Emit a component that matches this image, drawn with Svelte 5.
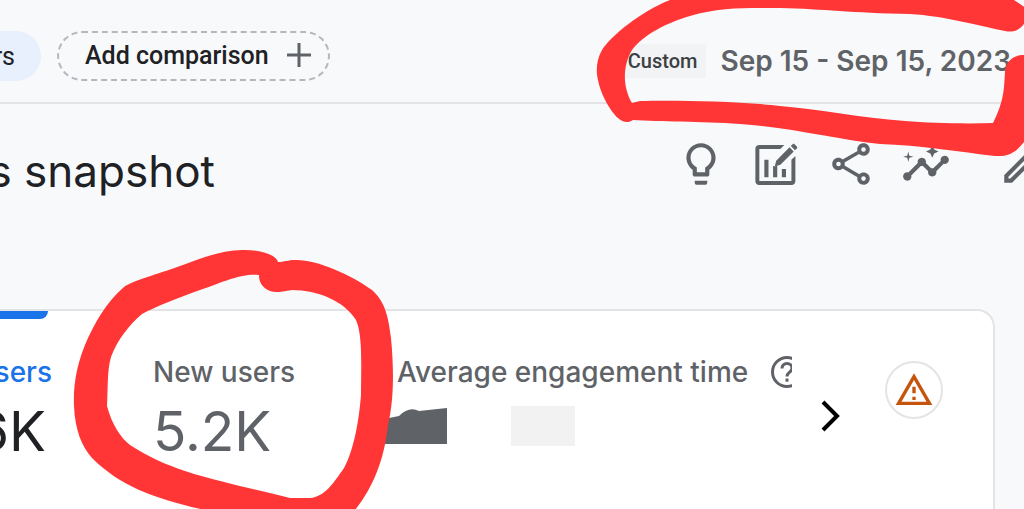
<script lang="ts">
  let {
    title = "s snapshot",
    range = "Sep 15 - Sep 15, 2023",
  }: {
    title?: string;
    range?: string;
  } = $props();

  const actions = [
    {
      label: "Insights",
      path: "M9 21c0 .55.45 1 1 1h4c.55 0 1-.45 1-1v-1H9v1zm3-19C8.14 2 5 5.14 5 9c0 2.38 1.19 4.47 3 5.74V17c0 .55.45 1 1 1h6c.55 0 1-.45 1-1v-2.26c1.81-1.27 3-3.36 3-5.74 0-3.86-3.14-7-7-7zm2.85 11.1l-.85.6V16h-4v-2.3l-.85-.6A4.997 4.997 0 017 9c0-2.76 2.24-5 5-5s5 2.24 5 5c0 1.63-.8 3.16-2.15 4.1z",
    },
    {
      label: "Customize report",
      path: "M4 2.9h12l-1.9 1.9H4v15.4h15.4V10l1.9-1.9V20.3c0 1-.8 1.8-1.8 1.8H3.9c-1 0-1.8-.8-1.8-1.8V4.7c0-1 .8-1.8 1.9-1.8zM6.4 10h2v8.4h-2zM10.6 13h2v5.4h-2zM14.8 14.4h2v4h-2zM12.1 10.4l6.4-6.4 2 2-6.4 6.4-2.7.8zM19.1 3.4l.9-.9c.3-.3.6-.3.9 0l1.1 1.1c.3.3.3.6 0 .9l-.9.9z",
    },
    {
      label: "Share",
      path: "M18 16.1c-.8 0-1.5.3-2 .8l-7.1-4.2c.1-.2.1-.5.1-.7s0-.5-.1-.7L15.9 7.2c.6.5 1.3.8 2.1.8 1.7 0 3-1.3 3-3s-1.3-3-3-3-3 1.3-3 3c0 .2 0 .5.1.7L8 9.8C7.5 9.3 6.8 9 6 9c-1.7 0-3 1.3-3 3s1.3 3 3 3c.8 0 1.5-.3 2-.8l7.1 4.2c-.1.2-.1.4-.1.6 0 1.6 1.3 3 3 3s3-1.3 3-3-1.3-2.9-3-2.9zM18 3.9a1.1 1.1 0 110 2.2 1.1 1.1 0 010-2.2zM6 13.1a1.1 1.1 0 110-2.2 1.1 1.1 0 010 2.2zm12 7a1.1 1.1 0 110-2.2 1.1 1.1 0 010 2.2z",
    },
    {
      label: "Trends",
      path: "M21 8c-1.45 0-2.26 1.44-1.93 2.51l-3.55 3.56c-.3-.09-.74-.09-1.04 0l-2.55-2.55C12.27 10.45 11.46 9 10 9c-1.45 0-2.27 1.44-1.93 2.52l-4.56 4.55C2.44 15.74 1 16.55 1 18c0 1.1.9 2 2 2 1.45 0 2.26-1.44 1.93-2.51l4.55-4.56c.3.09.74.09 1.04 0l2.55 2.55C12.73 16.55 13.54 18 15 18c1.45 0 2.27-1.44 1.93-2.52l3.56-3.55C21.56 12.26 23 11.45 23 10c0-1.1-.9-2-2-2zM15 9l.94-2.07L18 6l-2.06-.93L15 3l-.92 2.07L12 6l2.08.93zM3.5 11L4 9l2-.5L4 8l-.5-2L3 8l-2 .5L3 9z",
    },
    {
      label: "Edit",
      path: "M14.06 9.02l.92.92L5.92 19H5v-.92l9.06-9.06M17.66 3c-.25 0-.51.1-.7.29l-1.83 1.83 3.75 3.75 1.83-1.83c.39-.39.39-1.02 0-1.41l-2.34-2.34c-.2-.2-.45-.29-.71-.29zm-3.6 3.19L3 17.25V21h3.75L17.81 9.94l-3.75-3.75z",
    },
  ];
</script>

<div class="page">
  <header class="topbar">
    <div class="filters">
      <button class="chip">rs</button>
      <button class="add-btn">
        Add comparison
        <svg class="plus" viewBox="0 0 26 26" aria-hidden="true">
          <path d="M13 1v24M1 13h24" />
        </svg>
      </button>
    </div>
    <button class="date-range">
      <span class="preset">Custom</span>
      <span class="range">{range}</span>
    </button>
  </header>

  <section class="heading">
    <h1>{title}</h1>
    <div class="actions">
      {#each actions as action}
        <button class="icon-btn" aria-label={action.label}>
          <svg viewBox="0 0 24 24"><path d={action.path} fill-rule="evenodd" /></svg>
        </button>
      {/each}
    </div>
  </section>

  <main class="card">
    <div class="tab-bar"></div>
    <div class="metrics">
      <div class="metric selected">
        <div class="label">sers</div>
        <div class="value">6K</div>
      </div>
      <div class="metric new-users">
        <div class="label">New users</div>
        <div class="value">5.2K</div>
      </div>
      <div class="metric engagement">
        <div class="label">
          Average engagement time
          <span class="help">
            <svg viewBox="0 0 34 34" aria-hidden="true">
              <circle cx="17" cy="17" r="14.5" />
              <path d="M12 13.5c0-3 2-5 5-5s5 2 5 4.7c0 4-5 4-5 8.3" />
              <path d="M17 23.5v3.2" />
            </svg>
          </span>
        </div>
        <div class="redacted">
          <svg class="scribble" viewBox="0 0 70 40" aria-hidden="true">
            <path d="M0 17L12 12 22 10Q32 0 42 5L70 2V38H0z" />
          </svg>
          <div class="blank"></div>
        </div>
      </div>
      <button class="next" aria-label="Next metrics">
        <svg viewBox="0 0 20 32"><path d="M2 2l14 14L2 30" /></svg>
      </button>
      <button class="warning" aria-label="Data quality">
        <svg viewBox="0 0 24 24">
          <path d="M12 5.99L19.53 19H4.47L12 5.99M12 2L1 21h22L12 2zm1 14h-2v2h2v-2zm0-6h-2v4h2v-4z" />
        </svg>
      </button>
    </div>
  </main>

  <svg class="marks" width="1024" height="509" viewBox="0 0 1024 509" aria-hidden="true">
    <path
      d="M670 0C640 12 612 35 602 50C596 60 596 72 598 80C601 96 612 113 618 118C623 123 629 123 633 120C660 122 700 121 740 124C790 127 840 140 880 144C920 145 960 152 995 156C1010 157 1017 151 1024 142V55C1012 55 1006 62 1005 72C1004 85 1005 100 993 123C965 124 930 123 905 121C860 118 820 109 780 106C740 101 670 100 640 101L632 103C622 86 623 65 632 50C644 34 667 23 690 16C720 7 745 8 780 8C825 9 850 13 910 14C945 16 980 26 1005 31C1015 33 1022 29 1026 20V8L1014 0Z"
    />
    <path
      fill-rule="evenodd"
      d="M278 262C276 254 258 250 246 250C222 249 200 259 180 266C158 274 132 281 124 287C106 302 94 325 88 338C77 362 73 385 74 406C75 430 82 447 92 458C120 486 155 499 205 510H355C372 489 384 462 388 425C394 400 394 370 391 338C388 313 384 301 372 290C350 274 315 259 295 260C288 260 284 262 278 262ZM259 275C243 273 228 280 200 290C175 299 157 306 142 314C130 324 117 340 111 357C107 370 108 390 107 406C112 425 121 438 130 445C150 458 165 464 185 471C222 483 256 489 290 498H310C325 497 334 482 344 468C354 450 359 420 361 395C361 370 363 335 356 320C344 301 318 290 292 290C280 292 276 293 270 291C261 287 259 281 259 275Z"
    />
  </svg>
</div>

<style>
  :global(body) {
    margin: 0;
    background: #f8f9fb;
  }

  .page {
    position: relative;
    display: flex;
    flex-direction: column;
    height: 100vh;
    overflow: hidden;
    color: #202124;
    font-family: Inter, "Open Sans", sans-serif;
  }

  button {
    border: none;
    background: none;
    padding: 0;
    color: inherit;
    font: inherit;
  }

  svg {
    display: block;
  }

  .topbar {
    display: flex;
    justify-content: space-between;
    align-items: flex-start;
    box-sizing: border-box;
    height: 104px;
    padding: 31px 13px 0 0;
    border-bottom: 2px solid #e2e4e6;
  }

  .filters {
    display: flex;
    gap: 16px;
    font-family: Roboto, sans-serif;
    font-size: 25px;
    font-weight: 500;
  }

  .chip {
    display: flex;
    justify-content: flex-end;
    align-items: center;
    box-sizing: border-box;
    width: 41px;
    height: 50px;
    padding-right: 26px;
    border-radius: 0 25px 25px 0;
    background: #e8effd;
    overflow: hidden;
    font-weight: 400;
  }

  .add-btn {
    display: flex;
    align-items: center;
    gap: 17px;
    height: 50px;
    box-sizing: border-box;
    padding: 0 16px 2px 26px;
    border: 2px dashed #b4b7bb;
    border-radius: 25px;
  }

  .plus {
    width: 26px;
    height: 26px;
    fill: none;
    stroke: #5f6368;
    stroke-width: 3;
  }

  .date-range {
    display: flex;
    align-items: center;
    gap: 14px;
    height: 60px;
    color: #5f6368;
    white-space: nowrap;
  }

  .preset {
    padding: 0 9px;
    background: #f2f3f4;
    color: #3c4043;
    font-family: Roboto, sans-serif;
    font-size: 20px;
    font-weight: 500;
    line-height: 34px;
  }

  .range {
    font-size: 28px;
    font-weight: 600;
  }

  .heading {
    display: flex;
    justify-content: space-between;
    align-items: flex-start;
    padding-top: 35px;
    margin-right: -24px;
    height: 170px;
  }

  h1 {
    display: flex;
    justify-content: flex-end;
    width: 215px;
    margin: 0;
    font-size: 44px;
    font-weight: 400;
    line-height: 64px;
    white-space: nowrap;
  }

  .actions {
    display: flex;
    gap: 25px;
  }

  .icon-btn {
    width: 50px;
    height: 50px;
    fill: #5f6368;
  }

  .icon-btn:last-child {
    margin-left: 22px;
  }

  .card {
    flex: 1;
    margin-right: 29px;
    border: 2px solid #e2e4e6;
    border-width: 2px 2px 0 0;
    border-radius: 0 18px 0 0;
    background: #fff;
  }

  .tab-bar {
    width: 48px;
    height: 8px;
    border-radius: 0 0 8px 0;
    background: #1a73e8;
  }

  .metrics {
    display: flex;
    align-items: flex-start;
    padding: 33px 50px 0 0;
    color: #5f6368;
  }

  .metric {
    white-space: nowrap;
  }

  .label {
    font-size: 28px;
    font-weight: 500;
    line-height: 40px;
  }

  .value {
    font-size: 55px;
    line-height: 78px;
  }

  .selected {
    display: flex;
    flex-direction: column;
    align-items: flex-end;
    width: 52px;
    color: #202124;
  }

  .selected .label {
    color: #1a73e8;
  }

  .selected .value {
    padding-right: 6px;
  }

  .new-users {
    margin-left: 101px;
    width: 224px;
  }

  .engagement {
    flex: 1;
  }

  .engagement .label {
    display: flex;
    align-items: center;
    gap: 22px;
    padding-left: 20px;
  }

  .help {
    width: 22px;
    overflow: hidden;
  }

  .help svg {
    width: 34px;
    height: 34px;
    fill: none;
    stroke: #5f6368;
    stroke-width: 3;
  }

  .redacted {
    display: flex;
    align-items: center;
    gap: 64px;
    padding-top: 14px;
  }

  .scribble {
    width: 70px;
    height: 40px;
    fill: #5f6368;
  }

  .blank {
    width: 64px;
    height: 40px;
    background: #f2f2f2;
  }

  .next {
    margin: 48px 44px 0 0;
  }

  .next svg {
    width: 20px;
    height: 32px;
    fill: none;
    stroke: #000;
    stroke-width: 4;
  }

  .warning {
    display: flex;
    justify-content: center;
    align-items: center;
    box-sizing: border-box;
    width: 58px;
    height: 58px;
    margin-top: 9px;
    border: 2px solid #e2e4e6;
    border-radius: 50%;
  }

  .warning svg {
    width: 40px;
    height: 40px;
    fill: #c5550c;
  }

  .marks {
    position: absolute;
    top: 0;
    left: 0;
    fill: #ff3635;
    pointer-events: none;
  }
</style>
